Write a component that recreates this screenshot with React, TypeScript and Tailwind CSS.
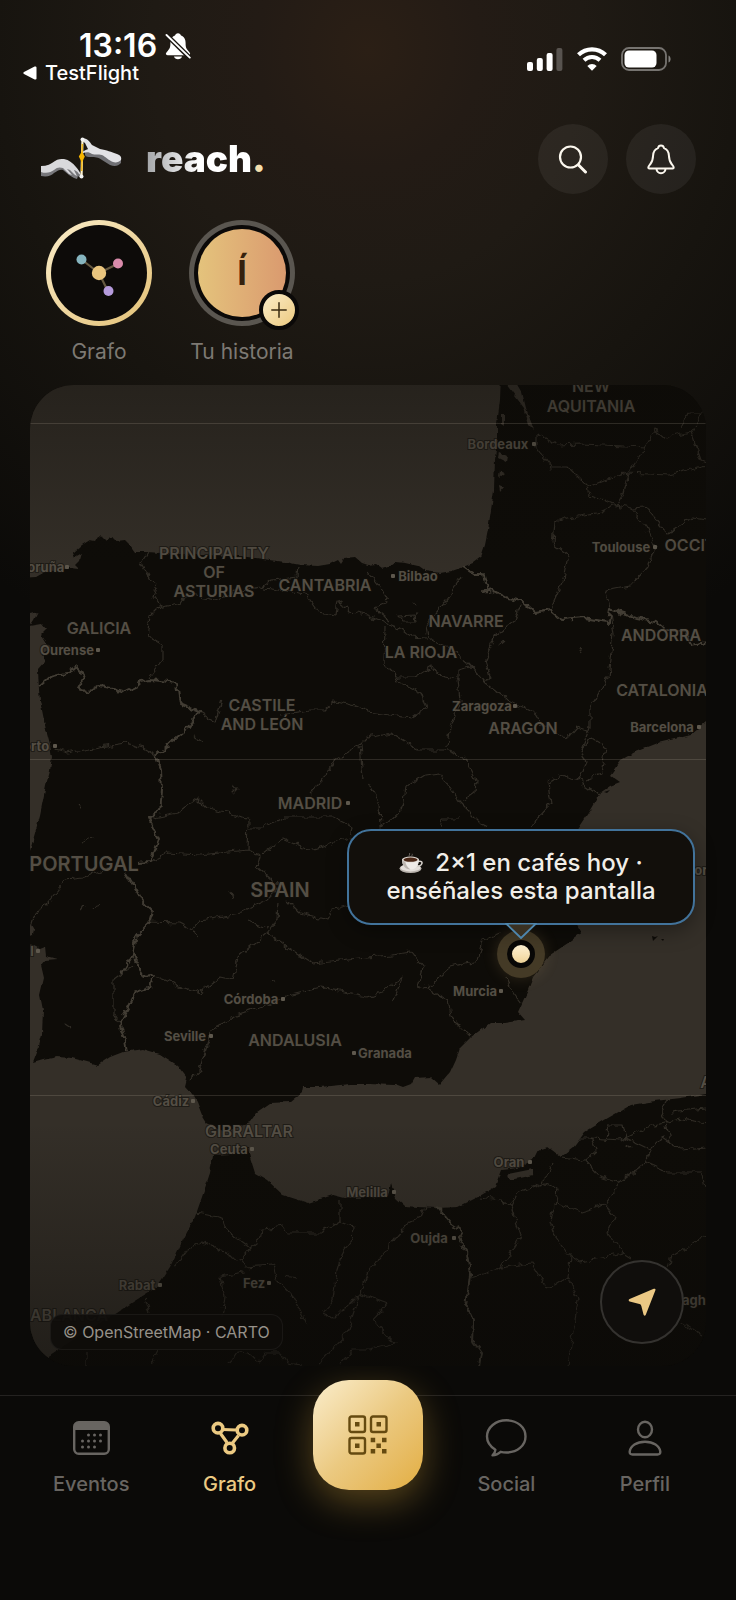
import type { ReactNode } from "react";

const MAP = { x: 30, y: 385, width: 676, height: 981 };
const VENUE = { x: 521, y: 954 };

const WATER = [
    // Bay of Biscay
    "M20 375H501L500 400 497 424 497 440 495 460 494 490 491 510 488 530 485 545 481 557 473 563 463 567 452 571 440 573 425 571 418 566 405 563 395 562 388 567 382 569 375 564 368 565 362 563 355 557 345 558 341 564 338 560 330 564 318 566 300 565 285 562 270 560 240 556 200 555 160 553 148 552 135 552 130 545 125 540 117 541 113 537 107 541 103 537 98 536 95 541 90 540 82 545 73 553 75 558 82 554 80 561 76 565 80 569 70 568 60 570 45 572 36 577 20 578Z",
    // Portuguese coast
    "M20 616L30 614 38 612 34 620 30 626 42 624 46 629 41 634 47 644 52 647 42 654 45 662 38 670 39 690 40 700 43 715 46 730 50 745 52 757 50 770 46 785 40 815 30 851H20Z",
    "M20 924L30 923 34 930 33 936 28 938ZM20 943L34 945 40 948 45 946 46 956 57 959 45 960 41 965 44 978 40 995 43 1010 42 1035 38 1050 33 1063 43 1060 57 1057 72 1058 87 1062 98 1065 110 1057 123 1052 143 1049 160 1054 177 1065 187 1078 185 1086 193 1095 197 1102 202 1115 207 1123 225 1132 240 1126 250 1122 257 1112 270 1103 290 1102 302 1092 303 1087 320 1087 350 1084 368 1084 395 1085 403 1088 411 1085 415 1078 431 1077 440 1085 450 1073 456 1060 460 1048 471 1037 490 1023 505 1023 525 1020 518 1012 528 990 533 977 541 967 550 955 568 943 581 933 575 923 560 900 552 870 562 850 578 828 590 810 600 793 610 786 620 782 610 775 621 760 635 752 658 743 691 735 706 722H716V1094H706L681 1098 655 1101 631 1105 608 1118 585 1132 573 1148 561 1157 548 1147 538 1150 533 1160 518 1168 501 1170 495 1187 478 1197 458 1207 438 1208 418 1207 405 1206 396 1198 391 1183 388 1197 345 1198 333 1195 308 1203 283 1195 267 1180 255 1173 250 1157 248 1148 232 1154 213 1155 210 1173 202 1197 195 1217 183 1240 170 1267 157 1287 133 1302 117 1313 82 1334 50 1355 42 1376H20Z",
    // Gironde and Arcachon
    "M503 380H515L522 392 526 408 534 430 529 425 524 408 512 392ZM499 452L507 456 506 462 498 458ZM501 413H504V426L501 424ZM500 470L505 473 499 478ZM499 485L504 487 500 492Z",
    "M508 1174L533 1169 533 1175 510 1180Z",
];

const BORDERS = [
    "M463 567L475 575 484 575 487 587 483 592 492 590 505 597 522 601 535 613 549 610 562 620 585 618 608 622 610 609 635 618 655 622 665 630 685 632 691 645 706 642",
    "M39 687L50 677 65 673 78 667 85 675 78 688 88 692 98 686 112 688 125 692 138 686 140 682 150 680 177 683 180 704 199 712 190 727 172 741 156 756 161 770 162 790 160 812 149 818 158 838 150 862 137 863M125 872L133 885 143 902 153 912 150 922 137 935 133 955 145 977 154 975 150 987 136 992 120 1022 125 1040 127 1052M133 955L122 973",
    "M437 1207L452 1225 463 1232 459 1240 467 1252 470 1275 466 1305 473 1320 472 1340 481 1352 479 1366",
];

const REGIONS = [
    // northern Spain
    "M148 552L141 563 150 580 158 583 153 597 160 607 150 617 147 636 163 645 163 660 150 678M160 607L180 602 190 595 215 600 240 590 262 587 272 580 297 577 298 565M265 588L305 594 318 612 335 615 337 600 345 606 350 612 368 615 398 627 411 637 426 638M368 573L381 590 388 602 375 608 390 620M398 616L415 615 416 622 402 622ZM199 712L215 722 222 700M280 715L310 710 325 710 335 701 355 706 368 712 411 718 426 708 421 693 395 680 398 677 384 663 385 627M398 677L415 677 431 667 445 677 458 680 458 670 471 667 486 683M461 577L446 600 435 613 426 625 428 638 448 647 468 663 486 683 508 700 535 713 541 723 560 736 570 737 578 728 590 732M520 605L515 620 495 635 485 660 490 677 486 683M458 680L460 700 451 727 447 747",
    // southern France
    "M536 433L558 445 581 444 645 447 655 430 665 438 691 432 701 413 688 413 680 430M691 432L701 460 706 462M536 433L536 447 551 467 568 467 588 487 590 495 616 505 623 493 628 473 645 447M588 487L605 480 628 473 668 475 706 465M616 505L601 512 568 518 555 522 553 543 568 555 563 580 550 610M616 505L631 508 646 527 655 547 648 567 631 585 605 590 610 608M631 508L645 507 668 533 691 518 706 520",
    // Aragon and Catalonia
    "M610 613L613 633 608 677 590 707 590 727 581 750 586 763 578 780 560 775 548 783 551 803 535 820 531 828M578 780L598 795M581 750L591 738 606 747 601 773 585 780M368 738L391 733 418 750 445 750 465 758 476 780 475 793 461 803 485 827M461 803L440 773 425 775 406 787 403 807 381 828 380 803 368 783M441 828L443 818 460 818",
    // central plateau
    "M55 750L67 753 100 747 125 743 143 748 155 755M153 818L177 813 197 798 207 808 227 812 248 820 247 850 260 855 257 867 280 887M249 828L263 828 283 817 303 817 333 817 352 827 350 838 310 850 283 838 263 853M148 863L167 853 200 855 247 850M310 793L323 780 335 760 360 745 368 737M360 745L363 780M30 927L33 917 50 900 65 880 83 878 110 867",
    "M148 922L180 923 193 930 200 920 240 913 267 900 280 887M287 900L300 913 327 920 333 910 348 905M278 902L277 920 267 933 238 957 233 980 220 977 200 993 177 985 153 975M247 920L267 928M267 933L287 947 313 963 367 957 391 955 411 952 423 967 418 985 428 988 448 1000 451 1017 471 1037M133 965L113 980 113 1013 120 1023M203 1058L212 1030 233 1017 263 1007 287 995 320 987 367 997 385 990 403 977 393 1000M428 988L451 967 478 960 483 940 501 933M506 977L511 990 521 1003M207 1047L200 1070 188 1080",
    // Morocco
    "M197 1213L223 1218 228 1232 250 1248 240 1260 217 1248 203 1242 187 1250 175 1267M250 1248L260 1240 262 1230 283 1227 287 1233 320 1233 340 1222 353 1227 352 1240 342 1253 337 1270 333 1300 323 1313 333 1320 360 1293 368 1273 391 1243 408 1223 421 1217 426 1205M340 1200L340 1222M240 1260L245 1267 273 1265 277 1280 293 1297 307 1325M245 1273L220 1277 225 1297 222 1317M145 1298L150 1313M360 1293L347 1333 317 1365M87 1350V1366M158 1350L150 1366M230 1363L237 1352 250 1353 260 1362 267 1353 280 1353 287 1363 302 1365M340 1365L353 1350 368 1350 395 1343 373 1320 388 1303 360 1293",
    // Algeria
    "M471 1278L501 1268 531 1263 548 1290 568 1277 570 1257 555 1237 550 1222 556 1203 558 1190 543 1183 553 1163M478 1197L501 1200 511 1207 521 1237 501 1268M511 1207L518 1192 543 1183M556 1203L581 1212 605 1205 615 1217 608 1233 623 1253 581 1262 570 1257M605 1205L620 1182 598 1175 585 1160 561 1157M585 1160L596 1150 591 1138 578 1138M591 1138L621 1140 645 1128 681 1119 706 1123M606 1140L608 1125 623 1125 626 1138 651 1150 645 1163 620 1182M651 1150L663 1138 680 1150 706 1148M665 1120L671 1143M668 1100L661 1112 665 1120M671 1112L706 1108M645 1163L668 1173 703 1173 706 1188M568 1277L578 1300 568 1365M668 1267L671 1257 706 1235M681 1323L703 1335M623 1253L631 1258",
    // reservoirs and rivers
    "M78 805L82 809M234 785L237 789 233 793M192 735L203 743M82 842L92 837M80 910L85 904M94 910L99 903M65 1024L71 1028M193 930L197 937M270 980L275 983M232 898L230 892M285 1276L297 1278M627 1144L631 1148M498 645L504 640M578 646L581 652M414 602L416 605",
];

type Label = { text: string; x: number; y: number };

const AREAS: Label[] = [
    { text: "NEW", x: 591, y: 392 },
    { text: "AQUITANIA", x: 591, y: 412 },
    { text: "PRINCIPALITY", x: 214, y: 559 },
    { text: "OF", x: 214, y: 578 },
    { text: "ASTURIAS", x: 214, y: 597 },
    { text: "CANTABRIA", x: 325, y: 591 },
    { text: "GALICIA", x: 99, y: 634 },
    { text: "NAVARRE", x: 466, y: 627 },
    { text: "LA RIOJA", x: 421, y: 658 },
    { text: "ANDORRA", x: 661, y: 641 },
    { text: "CATALONIA", x: 662, y: 696 },
    { text: "CASTILE", x: 262, y: 711 },
    { text: "AND LEÓN", x: 262, y: 730 },
    { text: "ARAGON", x: 523, y: 734 },
    { text: "MADRID", x: 310, y: 809 },
    { text: "ANDALUSIA", x: 295, y: 1046 },
    { text: "GIBRALTAR", x: 249, y: 1137 },
];

const COUNTRIES: Label[] = [
    { text: "PORTUGAL", x: 84, y: 871 },
    { text: "SPAIN", x: 280, y: 897 },
];

const CITIES: (Label & { dot: number })[] = [
    { text: "Bordeaux", x: 498, y: 449, dot: 534 },
    { text: "Toulouse", x: 621, y: 552, dot: 655 },
    { text: "Bilbao", x: 418, y: 581, dot: 393 },
    { text: "Coruña", x: 41, y: 572, dot: 67 },
    { text: "Ourense", x: 67, y: 655, dot: 98 },
    { text: "Zaragoza", x: 482, y: 711, dot: 515 },
    { text: "Barcelona", x: 662, y: 732, dot: 699 },
    { text: "Porto", x: 32, y: 751, dot: 55 },
    { text: "l", x: 32, y: 956, dot: 38 },
    { text: "Murcia", x: 475, y: 996, dot: 501 },
    { text: "Córdoba", x: 251, y: 1004, dot: 283 },
    { text: "Seville", x: 185, y: 1041, dot: 211 },
    { text: "Granada", x: 385, y: 1058, dot: 354 },
    { text: "Cádiz", x: 171, y: 1106, dot: 193 },
    { text: "Ceuta", x: 229, y: 1154, dot: 252 },
    { text: "Melilla", x: 367, y: 1197, dot: 394 },
    { text: "Oran", x: 509, y: 1167, dot: 530 },
    { text: "Oujda", x: 429, y: 1243, dot: 454 },
    { text: "Rabat", x: 137, y: 1290, dot: 160 },
    { text: "Fez", x: 254, y: 1288, dot: 269 },
];

function MapCanvas() {
    return (
        <svg
            viewBox={`${MAP.x} ${MAP.y} ${MAP.width} ${MAP.height}`}
            preserveAspectRatio="xMidYMid slice"
            className="absolute inset-0 h-full w-full font-[Inter,sans-serif]"
            role="img"
            aria-label="Mapa"
        >
            <defs>
                <filter id="coast" x="-5%" y="-5%" width="110%" height="110%" colorInterpolationFilters="sRGB">
                    <feTurbulence type="fractalNoise" baseFrequency="0.11" numOctaves="3" seed="4" />
                    <feDisplacementMap in="SourceGraphic" scale="4" xChannelSelector="R" yChannelSelector="G" />
                </filter>
                <filter id="border" x="-5%" y="-5%" width="110%" height="110%" colorInterpolationFilters="sRGB">
                    <feTurbulence type="fractalNoise" baseFrequency="0.13" numOctaves="2" seed="9" />
                    <feDisplacementMap in="SourceGraphic" scale="8" xChannelSelector="R" yChannelSelector="G" />
                </filter>
                <linearGradient id="shade" x1="0" y1="0" x2="0" y2="1">
                    <stop offset="0" stopColor="#0c0a07" stopOpacity="0.34" />
                    <stop offset="0.2" stopColor="#0c0a07" stopOpacity="0" />
                    <stop offset="0.75" stopColor="#0c0a07" stopOpacity="0" />
                    <stop offset="1" stopColor="#0a0907" stopOpacity="0.45" />
                </linearGradient>
            </defs>

            <rect x="0" y="300" width="800" height="1200" fill="#0e0c08" />
            <g fill="#342f28" filter="url(#coast)">
                {WATER.map((d) => (
                    <path key={d} d={d} />
                ))}
            </g>
            <g fill="#0e0c08">
                <path d="M652 936l3 1 3-1-3 3-2 2zM661 939l3 0-1 2zM604 792l6-2-3 3z" />
            </g>
            <g fill="none" strokeLinejoin="round" filter="url(#border)">
                <g stroke="#312d26" strokeWidth="1.2">
                    {REGIONS.map((d) => (
                        <path key={d} d={d} />
                    ))}
                </g>
                <g stroke="#423d34" strokeWidth="2">
                    {BORDERS.map((d) => (
                        <path key={d} d={d} />
                    ))}
                </g>
            </g>

            <g textAnchor="middle" fontWeight="600" fill="#544e44" stroke="#12100c" strokeOpacity="0.6" strokeWidth="2" paintOrder="stroke">
                <g fontSize="16">
                    {AREAS.map((label) => (
                        <text key={label.text} x={label.x} y={label.y}>
                            {label.text}
                        </text>
                    ))}
                    <text x="706" y="1088">A</text>
                    <text x="69" y="1321">ABLANCA</text>
                    <text x="690" y="551">OCCIT</text>
                </g>
                <g fontSize="20">
                    {COUNTRIES.map((label) => (
                        <text key={label.text} x={label.x} y={label.y}>
                            {label.text}
                        </text>
                    ))}
                </g>
                <g fontSize="13" fontWeight="700">
                    {CITIES.map((city) => (
                        <text key={city.text} x={city.x} y={city.y}>
                            {city.text}
                        </text>
                    ))}
                    <text x="701" y="875">or</text>
                    <text x="694" y="1305">agh</text>
                </g>
            </g>
            <g fill="#5e584d">
                {CITIES.map((city) => (
                    <rect key={city.text} x={city.dot - 2} y={city.y - 7} width="4" height="4" rx="1" />
                ))}
                <rect x="346" y="801" width="4" height="4" rx="1" />
            </g>

            <rect x="0" y={MAP.y} width="800" height={MAP.height} fill="url(#shade)" />
            <g fill="#cfc6b4" fillOpacity="0.17">
                <rect x="0" y="423" width="800" height="1" />
                <rect x="0" y="759" width="800" height="1" />
                <rect x="0" y="1095" width="800" height="1" />
            </g>
        </svg>
    );
}

function CoffeeCup() {
    return (
        <svg viewBox="0 0 24 22" className="mr-3 inline-block h-[22px] w-6 align-[-3px]" role="img" aria-label="café">
            <ellipse cx="11.5" cy="16.5" rx="11" ry="4.5" fill="#b9b3ad" />
            <ellipse cx="11.5" cy="15.8" rx="10" ry="3.6" fill="#e4dfda" />
            <path d="M19 9.5c3-1 4.6.3 3.8 2.3-.6 1.7-3 2.6-5.4 2.6" fill="none" stroke="#d6d1cb" strokeWidth="1.5" />
            <path d="M3 7.5c0 5.500 3 10 8.500 10s8.500-4.500 8.500-10z" fill="#efebe7" />
            <path d="M3 7.5c0 5.500 3 10 8.500 10-3-2-5-5-5.500-9z" fill="#bdb7b1" />
            <ellipse cx="11.5" cy="7.5" rx="8.5" ry="3" fill="#dcd6d0" />
            <ellipse cx="11.5" cy="7.7" rx="7" ry="2.1" fill="#4a2716" />
            <path d="M10.500 5c-1.500-1.500 1-2.500 0-4M13 5c-1-1.300.8-2 .2-3.200" fill="none" stroke="#77706a" strokeWidth="0.8" />
        </svg>
    );
}

function StatusBar() {
    return (
        <div className="flex items-start justify-between pt-[29px] pr-[65px] pl-[23px] text-white">
            <div>
                <div className="ml-14 flex items-center gap-2 text-[32px] leading-[34px] font-semibold">
                    <span>13:16</span>
                    <svg viewBox="0 0 26 28" className="h-7 w-[26px]" fill="currentColor">
                        <path d="M13 1.2c-1.6 0-2.7 1-3 2.3-3.4 1.2-4.6 4.2-4.6 7.5 0 4.2-.6 5.6-2.700 7.900C1.200 20.500.8 21.300.9 22c.1.800.8 1.200 1.700 1.200h20.800c.9 0 1.600-.4 1.700-1.200.1-.7-.3-1.500-1.800-3.100-2.100-2.300-2.700-3.700-2.700-7.900 0-3.300-1.200-6.300-4.600-7.500-.3-1.300-1.400-2.300-3-2.300zM9 24.500c.5 1.800 2 2.800 4 2.800s3.500-1 4-2.800z" />
                        <path d="M1 2.500 25 26" stroke="#1b1712" strokeWidth="4.6" />
                        <path d="M1.500 3 24.800 25.600" stroke="currentColor" strokeWidth="1.9" strokeLinecap="round" />
                    </svg>
                </div>
                <a href="#testflight" className="flex items-center gap-2 text-[20px] leading-5 font-medium">
                    <svg viewBox="0 0 14 14" className="h-3.5 w-3.5" fill="currentColor">
                        <path d="M1 6.100 11.600.6c1-.5 1.900 0 1.900 1v10.800c0 1-.9 1.500-1.900 1L1 7.900c-.9-.5-.9-1.300 0-1.800z" />
                    </svg>
                    TestFlight
                </a>
            </div>
            <div className="mt-[18px] flex items-center gap-3.5">
                <svg viewBox="0 0 36 24" className="h-6 w-9" fill="currentColor">
                    <rect x="0" y="15" width="6" height="9" rx="2" />
                    <rect x="9.8" y="11" width="6" height="13" rx="2" />
                    <rect x="19.6" y="6" width="6" height="18" rx="2" />
                    <rect x="29.4" y="1" width="6" height="23" rx="2" opacity="0.25" />
                </svg>
                <svg viewBox="0 0 30 24" className="h-6 w-[30px]" fill="none" stroke="currentColor">
                    <path d="M1.500 7.800a19.300 19.300 0 0 1 27 0" strokeWidth="4.2" />
                    <path d="M7 13.300a11.500 11.500 0 0 1 16 0" strokeWidth="4" />
                    <path d="M15 23.800 10.300 19a6.700 6.700 0 0 1 9.400 0z" fill="currentColor" stroke="none" />
                </svg>
                <svg viewBox="0 0 50 24" className="h-6 w-[50px]">
                    <rect x="1" y="1" width="44" height="22" rx="7" fill="none" stroke="#fff" strokeOpacity="0.4" strokeWidth="1.8" />
                    <path d="M47.500 8.500c2.800 1 2.800 6 0 7z" fill="#fff" fillOpacity="0.45" />
                    <rect x="3.5" y="3.5" width="32" height="17" rx="4.5" fill="#fff" />
                </svg>
            </div>
        </div>
    );
}

function HandsLogo() {
    return (
        <svg viewBox="0 0 84 44" className="h-11 w-[84px]" aria-hidden="true">
            <path d="M1 31c6-1 10-2 14-5 3-2 6-2 9-1 5 1 8 3 11 7 3 3 6 4 6 6 0 3-1 3-3 1l-1 3-3-1-5-3-6-5c-2-1-5 0-9 3-3 3-7 4-13 3z" fill="#77777b" />
            <path d="M1 29c6 0 10-2 14-5 3-2 6-2 9-2 5 1 9 4 12 8 2 2 4 5 5 8l-2-1c-2-3-4-4-5-4l3 6-2-1-5-5-3-1 5 6-3-1-6-6c-3-1-6-1-9 2-3 2-7 4-13 2z" fill="#d9d9dc" />
            <path d="M45 14c5-2 8-1 10 1l8 2c5 3 7 7 12 7l6-2v4c-3 3-6 4-11 2l-8-5c-4-3-7-3-11-3-3 0-5 0-6-2z" fill="#707074" />
            <path d="M43 1c5 1 7 4 9 7l8 4c7 1 11 3 17 5 3 1 5 3 4 6-2 2-5 3-8 2-5-2-7-5-11-7-4-1-7 0-10-1-3-2-5-2-9-1-1-2 3-3 5-4l-3-6-3-2z" fill="#e2e2e5" />
            <path d="M42.500 2 41.500 40" stroke="#fff3ce" strokeWidth="2.2" />
            <path d="M42.300 7 41.700 34" stroke="#f0b71d" strokeWidth="1.6" />
            <path d="m41.800 14.500 3 5-3 6-3-6z" fill="#f7b500" />
            <circle cx="42.5" cy="2.5" r="2" fill="#f2f2f2" />
            <circle cx="41.5" cy="39.5" r="2" fill="#f2f2f2" />
        </svg>
    );
}

function RoundButton({ label, children }: { label: string; children: ReactNode }) {
    return (
        <button type="button" aria-label={label} className="flex h-[70px] w-[70px] items-center justify-center rounded-full bg-white/6 text-[#fbf7ee]">
            {children}
        </button>
    );
}

function Header() {
    return (
        <header className="mt-[41px] flex items-center justify-between pr-10 pl-10">
            <div className="flex items-center gap-[22px]">
                <HandsLogo />
                <h1 className="text-[37px] leading-[44px] font-black">
                    <span className="bg-linear-to-r from-[#a4a6a9] via-white via-50% to-white bg-clip-text text-transparent">reach</span>
                    <span className="text-[#f3dfae]">.</span>
                </h1>
            </div>
            <div className="flex gap-[18px]">
                <RoundButton label="Buscar">
                    <svg viewBox="0 0 30 30" className="h-[30px] w-[30px]" fill="none" stroke="currentColor" strokeLinecap="round">
                        <circle cx="12.5" cy="13" r="10.5" strokeWidth="2.2" />
                        <path d="m20.500 21 7 7" strokeWidth="3" />
                    </svg>
                </RoundButton>
                <RoundButton label="Notificaciones">
                    <svg viewBox="0 0 28 31" className="h-[31px] w-7" fill="none" stroke="currentColor" strokeWidth="2" strokeLinejoin="round">
                        <path d="M14 1.500c-1.800 0-2.700 1.100-3 2.600C7.500 5.300 6.300 8.200 6.100 11.500 5.900 16 5.500 17.500 3.400 20 2 21.700 1.300 22.400 1.300 23.400c0 .6.400 1 1 1h23.400c.6 0 1-.4 1-1 0-1-.7-1.700-2.100-3.400-2.100-2.500-2.500-4-2.700-8.500-.2-3.300-1.400-6.200-4.900-7.400-.3-1.500-1.200-2.600-3-2.600z" />
                        <path d="M9.500 24.500c0 2.800 2 4.700 4.500 4.700s4.500-1.900 4.500-4.700" />
                    </svg>
                </RoundButton>
            </div>
        </header>
    );
}

function Stories() {
    return (
        <div className="mt-[26px] flex gap-[37px] px-[46px] text-center text-[21px] leading-7 text-[#7d7973]">
            <button type="button" className="w-[106px] whitespace-nowrap">
                <span className="block rounded-full bg-linear-to-br from-[#faedc9] to-[#e3c176] p-[5px]">
                    <span className="flex h-24 items-center justify-center rounded-full bg-[#0d0b09]">
                        <svg viewBox="0 0 48 46" className="h-[46px] w-12">
                            <path d="M24 23 6.500 9.500M24 23l19.500-9.500M24 23l9.500 19.500" stroke="#655941" strokeWidth="2.2" />
                            <circle cx="6.5" cy="9.5" r="5" fill="#86b5bf" />
                            <circle cx="43" cy="13.5" r="5" fill="#d98bab" />
                            <circle cx="33.5" cy="41" r="5" fill="#b59bdc" />
                            <circle cx="24" cy="23" r="7.2" fill="#e9c57e" />
                        </svg>
                    </span>
                </span>
                <span className="mt-3 block">Grafo</span>
            </button>
            <button type="button" className="w-[106px] whitespace-nowrap">
                <span className="relative block rounded-full bg-[#5a5650] p-[5px]">
                    <span className="block rounded-full bg-[#0b0908] p-1">
                        <span className="flex h-[88px] items-center justify-center rounded-full bg-linear-to-r from-[#e4c37c] to-[#da9a6f] text-[34px] leading-none font-bold text-[#35210d]">
                            Í
                        </span>
                    </span>
                    <span className="absolute -right-1 -bottom-1 flex h-10 w-10 items-center justify-center rounded-full border-4 border-[#0b0908] bg-linear-to-br from-[#fbedc8] to-[#ecc97f]">
                        <svg viewBox="0 0 16 16" className="h-4 w-4" stroke="#3a2b12" strokeWidth="1.5" strokeLinecap="round">
                            <path d="M8 .8v14.400M.8 8h14.400" />
                        </svg>
                    </span>
                </span>
                <span className="mt-3 block">Tu historia</span>
            </button>
        </div>
    );
}

function VenuePin() {
    return (
        <div
            className="absolute h-0 w-0"
            style={{
                left: `${((VENUE.x - MAP.x) / MAP.width) * 100}%`,
                top: `${((VENUE.y - MAP.y) / MAP.height) * 100}%`,
            }}
        >
            <div className="absolute -top-6 -left-6 flex h-12 w-12 items-center justify-center rounded-full bg-[#e9c57e]/25 shadow-[0_0_16px_rgba(233,197,126,0.15)]">
                <div className="h-7 w-7 rounded-full border-[5px] border-[#080706] bg-linear-to-b from-[#fff2d4] to-[#eed398]" />
            </div>
            <div className="absolute bottom-[29px] left-0 w-[348px] -translate-x-1/2 rounded-[24px] border-2 border-[#42739b] bg-[#120f0b] px-8 py-[18px] text-center text-[24px] leading-7 font-medium text-[#f1eee8] shadow-[0_6px_20px_rgba(0,0,0,0.35)]">
                <CoffeeCup />
                2×1 en cafés hoy · <br />
                <span className="whitespace-nowrap">enséñales esta pantalla</span>
                <svg viewBox="0 0 32 16" className="absolute top-full left-1/2 h-4 w-8 -translate-x-1/2">
                    <path d="M1 .5h30L16 15z" fill="#3a3122" stroke="#4e86ad" strokeWidth="1.8" strokeLinejoin="round" />
                </svg>
            </div>
        </div>
    );
}

function CalendarIcon() {
    const dots = [[15.5, 14], [21.5, 14], [27.5, 14], [9.5, 20], [15.5, 20], [21.5, 20], [27.5, 20], [9.5, 26], [15.5, 26], [21.5, 26]];
    return (
        <svg viewBox="0 0 37 34" className="h-[34px] w-[37px]">
            <rect x="1.2" y="1.2" width="34.6" height="31.6" rx="4.5" fill="none" stroke="currentColor" strokeWidth="2.4" />
            <path d="M1.500 9V5.500a4 4 0 0 1 4-4h26a4 4 0 0 1 4 4V9z" fill="currentColor" />
            {dots.map(([x, y]) => (
                <circle key={`${x}-${y}`} cx={x} cy={y} r="1.5" fill="currentColor" />
            ))}
        </svg>
    );
}

function GraphIcon() {
    return (
        <svg viewBox="0 0 38 34" className="h-[34px] w-[38px]" fill="none" stroke="currentColor">
            <path d="M12 8.500 25 9M9.500 12.500l6.500 9M27.500 14.500 21.500 22" strokeWidth="3.2" />
            <circle cx="7" cy="7.2" r="4.8" strokeWidth="3.6" />
            <circle cx="31" cy="9.2" r="4.8" strokeWidth="3.6" />
            <circle cx="18.7" cy="27" r="4.8" strokeWidth="3.6" />
        </svg>
    );
}

function QrIcon() {
    return (
        <svg viewBox="0 0 40 40" className="h-10 w-10" fill="#654a10">
            <g fill="none" stroke="#654a10" strokeWidth="2.4">
                <rect x="1.5" y="1.5" width="15.5" height="15.5" rx="2" />
                <rect x="23" y="1.5" width="15.5" height="15.5" rx="2" />
                <rect x="1.5" y="23" width="15.5" height="15.5" rx="2" />
            </g>
            <path d="M7 7h4.500v4.500H7zM28.500 7H33v4.500h-4.500zM7 28.500h4.500V33H7zM22.700 22.700h4.500v4.500h-4.500zM34 22.700h4.500v4.500H34zM28.400 28.400h4.500v4.500h-4.500zM22.700 34h4.500v4.500h-4.500zM34 34h4.500v4.500H34z" />
        </svg>
    );
}

function SocialIcon() {
    return (
        <svg viewBox="0 0 42 38" className="h-[38px] w-[42px]" fill="none" stroke="currentColor" strokeWidth="2.4" strokeLinejoin="round">
            <path d="M21.500 1.300c10.800 0 19 7 19 16.200s-8.200 16-19 16c-2 0-4-.2-5.800-.7-2.200 2-5 3.400-8.200 3.600 1.700-1.600 2.800-3.500 2.900-5.700C5.400 27.700 2 23 2 17.500 2 8.300 10.700 1.300 21.500 1.300z" />
        </svg>
    );
}

function ProfileIcon() {
    return (
        <svg viewBox="0 0 34 36" className="h-9 w-[34px]" fill="none" stroke="currentColor" strokeWidth="2.4" strokeLinejoin="round">
            <ellipse cx="17" cy="9.5" rx="7" ry="7.8" />
            <path d="M4.500 34.500c-2 0-3-1-2.800-3C2.500 26 8.500 21.700 17 21.700S31.500 26 32.300 31.500c.2 2-.8 3-2.800 3z" />
        </svg>
    );
}

function NavItem({ label, active = false, children }: { label: string; active?: boolean; children: ReactNode }) {
    return (
        <a
            href={`#${label.toLowerCase()}`}
            className={`flex flex-1 flex-col items-center gap-3 text-[20px] leading-6 font-medium ${active ? "text-[#ecca82]" : "text-[#686561]"}`}
        >
            <span className="flex h-11 items-center">{children}</span>
            {label}
        </a>
    );
}

export default function App() {
    return (
        <div className="flex min-h-screen flex-col bg-[#0b0a08] bg-[radial-gradient(ellipse_620px_660px_at_50%_50px,#2b1f15_0%,#231b15_18%,#1f1a14_35%,#17140f_60%,#0b0a08_100%)] font-[Inter,sans-serif]">
            <StatusBar />
            <Header />
            <Stories />

            <main className="relative mx-[30px] mt-[19px] min-h-[600px] flex-1">
                <div className="absolute inset-0 overflow-hidden rounded-[44px] bg-[#0e0c08]">
                    <MapCanvas />
                </div>
                <VenuePin />
                <div className="absolute bottom-4 left-5 rounded-xl border border-white/5 bg-[#0e0c0a]/90 px-3 py-1 text-[16px] leading-[26px] text-[#969189]">
                    © OpenStreetMap · CARTO
                </div>
                <button
                    type="button"
                    aria-label="Mi ubicación"
                    className="absolute right-[22px] bottom-[22px] flex h-[84px] w-[84px] items-center justify-center rounded-full border-2 border-[#34322f] bg-[#100e0c]"
                >
                    <svg viewBox="0 0 28 28" className="h-7 w-7" fill="#ebc884">
                        <path d="M25.800.8c1.200-.5 2 .3 1.600 1.500L17.800 26.700c-.6 1.400-2 1.300-2.300-.1l-2.100-8.300c-.3-1.200-.7-1.800-2-2.200l-9.700-2.600c-1.300-.4-1.400-1.800-.1-2.400z" />
                    </svg>
                </button>
            </main>

            <nav className="mt-[29px] flex border-t border-[#242220] bg-[#0b0a08] px-[22px] pt-5 pb-[104px]">
                <NavItem label="Eventos">
                    <CalendarIcon />
                </NavItem>
                <NavItem label="Grafo" active>
                    <GraphIcon />
                </NavItem>
                <div className="flex flex-1 justify-center">
                    <button
                        type="button"
                        aria-label="Código QR"
                        className="-mt-9 flex h-[110px] w-[110px] items-center justify-center rounded-[36px] bg-linear-to-br from-[#faedcb] via-[#ebc980] to-[#e3ae3f] shadow-[0_12px_36px_rgba(226,174,64,0.35)]"
                    >
                        <QrIcon />
                    </button>
                </div>
                <NavItem label="Social">
                    <SocialIcon />
                </NavItem>
                <NavItem label="Perfil">
                    <ProfileIcon />
                </NavItem>
            </nav>
        </div>
    );
}
